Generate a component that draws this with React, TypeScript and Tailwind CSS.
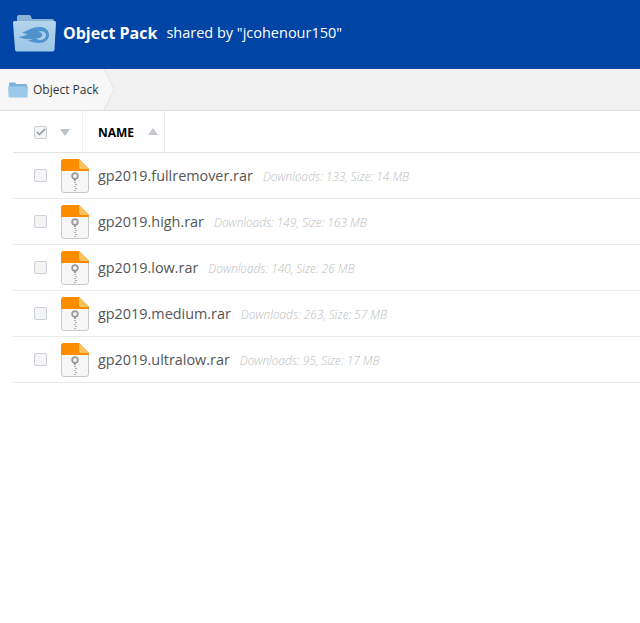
const files = [
  { name: 'gp2019.fullremover.rar', meta: 'Downloads: 133, Size: 14 MB' },
  { name: 'gp2019.high.rar', meta: 'Downloads: 149, Size: 163 MB' },
  { name: 'gp2019.low.rar', meta: 'Downloads: 140, Size: 26 MB' },
  { name: 'gp2019.medium.rar', meta: 'Downloads: 263, Size: 57 MB' },
  { name: 'gp2019.ultralow.rar', meta: 'Downloads: 95, Size: 17 MB' },
];

const BigFolder = () => (
  <svg width="44" height="37" viewBox="0 0 44 37" className="shrink-0">
    <defs>
      <linearGradient id="folderFront" x1="0" y1="0" x2="0" y2="1">
        <stop offset="0" stopColor="#b4d4ec" />
        <stop offset="1" stopColor="#9cc6e6" />
      </linearGradient>
    </defs>
    <path d="M4 2a2 2 0 0 1 2-2h10a2 2 0 0 1 2 1.500l1 2.500h20a2 2 0 0 1 2 2V12H4z" fill="#8db3d4" />
    <path d="M0 7.500A1.500 1.500 0 0 1 1.500 6h40A1.500 1.500 0 0 1 43 7.500L41.500 34.500a2 2 0 0 1-2 2H4a2 2 0 0 1-2-2z" fill="url(#folderFront)" />
    <path d="M36 20C36 25 31 28 26 28C22 28 18 27 14 25.500C16 25.500 18 25 19.500 24C15 24.500 10 24 5.500 22C9.500 21.500 12.500 20.500 15 19C13 19 11 18.500 9 17.500C14 16.500 18 12 27 12C32 12 36 15 36 20Z" fill="#4f92cc" />
    <path d="M33 20C33 23 30 25 27 25C25 25 23.500 24 23 23C25 23.500 28 23 29 21C30 19 28 17 25 17C27 15.500 33 16 33 20Z" fill="#a9cfeb" />
  </svg>
);

const SmallFolder = () => (
  <svg width="20" height="16" viewBox="0 0 20 16" className="shrink-0">
    <path d="M1 1.500a1 1 0 0 1 1-1h5l1.500 1.500H18a1 1 0 0 1 1 1V5H1z" fill="#7fb2d9" />
    <path d="M0 4.500h20l-.6 10a1 1 0 0 1-1 1H1.600a1 1 0 0 1-1-1z" fill="#9cc9e8" />
  </svg>
);

const ZipIcon = () => (
  <svg width="28" height="34" viewBox="0 0 28 34" className="shrink-0">
    <path d="M2.500.5H18L27.500 10v21a2.500 2.500 0 0 1-2.500 2.500H3A2.500 2.500 0 0 1 .5 31V3A2.500 2.500 0 0 1 2.500.5z" fill="#f6f6f6" stroke="#c9c9c9" />
    <path d="M3 0h15v12H0V3a3 3 0 0 1 3-3z" fill="#fb8c00" />
    <path d="M18 0l10 10v2H18z" fill="#fb8c00" />
    <path d="M18 0l10 10H20a2 2 0 0 1-2-2z" fill="#fdc25e" />
    <circle cx="14" cy="17" r="2.800" fill="none" stroke="#9a9a9a" strokeWidth="1.800" />
    <path d="M14 20v2" stroke="#9a9a9a" strokeWidth="2" />
    <path d="M13 23.500h2M14 25.500h2M13 27.500h2M14 29.500h2M13 31.500h2" stroke="#adadad" strokeWidth="1" />
  </svg>
);

const Check = ({ checked }: { checked?: boolean }) => (
  <div className="w-[11px] h-[11px] box-content border border-[#ccd0d8] rounded-[2px] bg-[#f4f4f4] flex items-center justify-center">
    {checked && (
      <svg width="10" height="8" viewBox="0 0 10 8" className="shrink-0">
        <path d="M1 4L3.500 6.500L9 1" fill="none" stroke="#8a96a8" strokeWidth="1.500" />
      </svg>
    )}
  </div>
);

const App = () => {
  return (
    <div className="w-[640px] h-[623px] bg-white overflow-hidden font-['Open_Sans',sans-serif]">
      <div className="h-[69px] bg-[#0044a6] flex items-start pl-[13px] pt-[15px]">
        <BigFolder />
        <span className="ml-[6px] mt-[7px] text-[16px] leading-[22px] font-bold text-white">Object Pack</span>
        <span className="ml-[9px] mt-[8px] text-[14.500px] leading-[20px] text-white">
          shared by "jcohenour150"
        </span>
      </div>

      <div className="h-[42px] bg-[#f1f1f1] border-b border-[#dddddd] flex">
        <div className="relative w-[104px] h-[41px] bg-[#f7f7f7] flex items-center pl-[8px]">
          <SmallFolder />
          <span className="ml-[5px] text-[12px] text-[#333333]">Object Pack</span>
          <svg width="10" height="41" viewBox="0 0 10 41" className="absolute left-[104px] top-0">
            <path d="M0 0L10 20.500L0 41z" fill="#f7f7f7" />
            <path d="M0 0L10 20.500L0 41" fill="none" stroke="#e4e4e4" />
          </svg>
        </div>
      </div>

      <div className="ml-[13px]">
        <div className="h-[42px] border-b border-[#e3e3e3] flex items-center">
          <div className="w-[70px] h-full flex items-center border-r border-[#ececec] pl-[21px]">
            <div className="mt-[1px]">
              <Check checked />
            </div>
            <div className="ml-[13px] mt-[1px] w-0 h-0 border-x-[5px] border-x-transparent border-t-[7px] border-t-[#bcc2c9]" />
          </div>
          <div className="w-[82px] h-full flex items-center border-r border-[#ececec] pl-[15px]">
            <span className="mt-[2px] text-[12px] font-bold text-black">NAME</span>
            <div className="ml-[14px] w-0 h-0 border-x-[5px] border-x-transparent border-b-[7px] border-b-[#c4c8cd]" />
          </div>
        </div>

        {files.map((f) => (
          <div key={f.name} className="h-[46px] border-b border-[#ebebeb] flex items-center pl-[21px]">
            <Check />
            <div className="ml-[14px]">
              <ZipIcon />
            </div>
            <span className="ml-[9px] mt-[1px] text-[14.400px] text-[#555555]">{f.name}</span>
            <span className="ml-[10px] mt-[2px] text-[11.850px] font-light italic text-[#bdbdbd]">{f.meta}</span>
          </div>
        ))}
      </div>
    </div>
  );
};

export default App;
